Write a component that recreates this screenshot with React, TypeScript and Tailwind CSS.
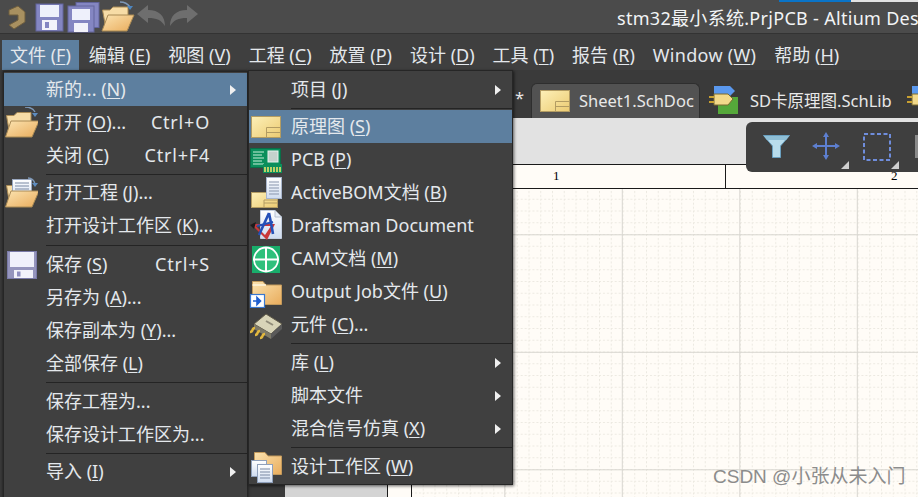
import type { ReactNode } from 'react';

const Label = ({ text }: { text: string }) => {
  const m = text.match(/^(.*\()(.)(\).*)$/);
  if (!m) return <span>{text}</span>;
  return (
    <span>
      {m[1]}
      <u className="underline-offset-2">{m[2]}</u>
      {m[3]}
    </span>
  );
};

const Defs = () => (
  <svg className="absolute w-0 h-0">
    <defs>
      <linearGradient id="yel" x1="0" y1="0" x2="1" y2="1">
        <stop offset="0" stopColor="#fdf0b8" />
        <stop offset="1" stopColor="#eccb72" />
      </linearGradient>
      <linearGradient id="org" x1="0" y1="0" x2="1" y2="1">
        <stop offset="0" stopColor="#fbe3b0" />
        <stop offset="1" stopColor="#e9ac5c" />
      </linearGradient>
      <linearGradient id="doc" x1="0" y1="0" x2="0" y2="1">
        <stop offset="0" stopColor="#ffffff" />
        <stop offset="1" stopColor="#cfdcf0" />
      </linearGradient>
    </defs>
  </svg>
);

const Icon = ({ children }: { children: ReactNode }) => (
  <svg width="34" height="32" viewBox="0 0 34 32" className="shrink-0">
    {children}
  </svg>
);

const SchIcon = () => (
  <Icon>
    <rect x="2.5" y="5.5" width="29" height="21" fill="url(#yel)" stroke="#b39c62" />
    <path d="M17.5 26V16.5H31M17.5 21.5H31" fill="none" stroke="#b39c62" />
  </Icon>
);

const PcbIcon = () => (
  <Icon>
    <rect x="1.5" y="4.5" width="30" height="19" fill="#0b8f5c" stroke="#0a6e48" />
    <path d="M4 8h11M4 11h9M4 14h11M4 17h9M4 20h11" stroke="#c8efd8" />
    <rect x="19" y="7" width="10" height="11" fill="#c4d2cc" stroke="#e8f2ee" />
    <rect x="14" y="20" width="19" height="9" fill="#0b8f5c" />
    <path d="M16 23v5M19 23v5M22 23v5M25 23v5M28 23v5M31 23v5" stroke="#e8e06a" strokeWidth="1.6" />
  </Icon>
);

const BomIcon = () => (
  <Icon>
    <rect x="2.5" y="15.5" width="26" height="15" fill="url(#yel)" stroke="#b39c62" />
    <path d="M15 30v-7h13M15 26h13" fill="none" stroke="#b39c62" />
    <rect x="17.5" y="0.5" width="15" height="21" fill="url(#doc)" stroke="#a9b6cc" />
    <path d="M20 5h10M20 8h10M20 11h10M20 14h10M20 17h10" stroke="#8895ad" />
  </Icon>
);

const DraftIcon = () => (
  <Icon>
    <path d="M11.5 0.5H26L32.5 7V28.5H11.5Z" fill="url(#doc)" stroke="#c4cede" />
    <path d="M26 .5V7H32.5" fill="#e7edf6" stroke="#b5c0d2" />
    <path d="M2 14L26 14L18 30Z M7 16L16 25L22 16Z" fill="#c9383a" fillRule="evenodd" />
    <path d="M20 3L15 14L10 25M20 3L22 13L24 24" stroke="#2550b8" strokeWidth="2.6" fill="none" />
    <path d="M8 16L24 12" stroke="#2550b8" strokeWidth="2" />
    <path d="M1 15L7 12L5 19Z" fill="#1c1c1c" />
  </Icon>
);

const CamIcon = () => (
  <Icon>
    <rect x="3" y="3" width="28" height="27" fill="#19ad6b" />
    <circle cx="17" cy="16.5" r="12" fill="#2fc07c" stroke="#fff" strokeWidth="1.8" />
    <path d="M17 4v25M4 16.5h26" stroke="#fff" strokeWidth="2" />
  </Icon>
);

const OutIcon = () => (
  <Icon>
    <path d="M3.5 5.5H14L17 9H32.5V28.5H3.5Z" fill="url(#org)" stroke="#c39a5c" />
    <path d="M3.5 9H17" stroke="#fff6df" strokeWidth="1.5" />
    <rect x="1.5" y="18.5" width="14" height="13" fill="#fff" stroke="#3a78d0" strokeWidth="1.2" />
    <path d="M4 25h7M8 21.5L11.5 25L8 28.5Z" stroke="#1f5fd0" strokeWidth="1.6" fill="#1f5fd0" />
  </Icon>
);

const ChipIcon = () => (
  <Icon>
    <path d="M5 15L17 5L33 15L22 25Z" fill="#d8d4b8" stroke="#5f5a48" />
    <path d="M5 15V20L22 30V25Z" fill="#7e7a68" />
    <path d="M22 25V30L33 20V15Z" fill="#5a5a5a" />
    <path d="M17 12L24 16" stroke="#8f8b78" strokeWidth="2" />
    <path d="M6 19C2 19 5 23 1 23M11 22C7 22 10 26 6 26M16 25C12 25 15 29 11 29" stroke="#e2b83e" strokeWidth="2.6" fill="none" />
  </Icon>
);

const WsIcon = () => (
  <Icon>
    <path d="M5.5 1.5H16L19 5H32.5V23.5H5.5Z" fill="url(#org)" stroke="#c39a5c" />
    <rect x="2.5" y="9.5" width="15" height="16" fill="url(#doc)" stroke="#8fa0bb" />
    <rect x="8.5" y="13.5" width="15" height="18" fill="url(#doc)" stroke="#8fa0bb" />
    <path d="M11 18h10M11 21h10M11 24h10M11 27h10" stroke="#7b89a3" />
  </Icon>
);

const OpenIcon = ({ doc }: { doc?: boolean }) => (
  <Icon>
    <path d="M2.5 8.5H10L13 5.5H27V29H6Z" fill="#f7dca6" stroke="#a98a55" />
    {doc && (
      <>
        <rect x="8.5" y="2.5" width="19" height="19" fill="url(#doc)" stroke="#9aa8c0" />
        <path d="M11 6h14M11 9h14M11 12h14M11 15h10" stroke="#7b89a3" />
      </>
    )}
    <path d="M1.5 30L7 14H35L28 30Z" fill="url(#org)" stroke="#a98a55" />
    <path d={doc ? 'M24 1C28 1 30 3 31 7' : 'M21 0C26 0 29 1 31 5'} stroke="#7d98b8" strokeWidth="1.4" fill="none" />
    <path d="M28 6L34 6L31 10Z" fill="#5d8cc0" />
  </Icon>
);

const SaveIcon = () => (
  <Icon>
    <rect x="3.5" y="2.5" width="29" height="27" fill="#9595bd" stroke="#7a7aa8" />
    <rect x="6" y="3" width="24" height="15" fill="#f0f1fb" />
    <rect x="10" y="21" width="19" height="8" fill="#f2f2fa" />
    <rect x="13" y="22.5" width="3.5" height="5" fill="#8f8fc0" />
  </Icon>
);

const Arrow = () => (
  <div className="w-0 h-0 border-y-[5.5px] border-y-transparent border-l-[6px] border-l-[#f0f0f0]" />
);

const Row = ({ text, icon, shortcut, arrow, active }: { text: string; icon?: ReactNode; shortcut?: string; arrow?: boolean; active?: boolean }) => (
  <div className={`h-[33px] flex items-center ${active ? 'bg-[#5d7f9f]' : ''}`}>
    <div className="w-[42px] shrink-0 flex items-center">{icon}</div>
    <div className="flex-1 whitespace-nowrap pb-[2px]"><Label text={text} /></div>
    {shortcut && <div className="mr-[37px] pb-[2px] whitespace-nowrap tracking-[0.8px]">{shortcut}</div>}
    {arrow && <div className="mr-[11px]"><Arrow /></div>}
  </div>
);

const Sep = ({ className }: { className: string }) => (
  <div className={`flex items-center pl-[42px] ${className}`}>
    <div className="h-px w-full bg-[#242424]" />
  </div>
);

const FileMenu = () => (
  <div className="absolute left-[3px] top-[71px] w-[245px] h-[440px] bg-[#404040] border border-[#262626] pt-px text-[#e4e8ec] shadow-[0_0_3px_rgba(0,0,0,.6)]">
    <Row text="新的... (N)" arrow active />
    <Row text="打开 (O)..." shortcut="Ctrl+O" icon={<OpenIcon />} />
    <Row text="关闭 (C)" shortcut="Ctrl+F4" />
    <Sep className="h-[4px]" />
    <Row text="打开工程 (J)..." icon={<OpenIcon doc />} />
    <Row text="打开设计工作区 (K)..." />
    <Sep className="h-[6px]" />
    <Row text="保存 (S)" shortcut="Ctrl+S" icon={<SaveIcon />} />
    <Row text="另存为 (A)..." />
    <Row text="保存副本为 (Y)..." />
    <Row text="全部保存 (L)" />
    <Sep className="h-[5px]" />
    <Row text="保存工程为..." />
    <Row text="保存设计工作区为..." />
    <Sep className="h-[4px]" />
    <Row text="导入 (I)" arrow />
    <div className="pt-[3px]">
      <Row text="导出 (E)" arrow />
    </div>
  </div>
);

const NewMenu = () => (
  <div className="absolute left-[248px] top-[70px] w-[265px] h-[415px] bg-[#404040] border border-[#262626] pt-[2px] text-[#e4e8ec] shadow-[1px_1px_3px_rgba(0,0,0,.6)]">
    <Row text="项目 (J)" arrow />
    <Sep className="h-[4px]" />
    <Row text="原理图 (S)" icon={<SchIcon />} active />
    <Row text="PCB (P)" icon={<PcbIcon />} />
    <Row text="ActiveBOM文档 (B)" icon={<BomIcon />} />
    <Row text="Draftsman Document" icon={<DraftIcon />} />
    <Row text="CAM文档 (M)" icon={<CamIcon />} />
    <Row text="Output Job文件 (U)" icon={<OutIcon />} />
    <Row text="元件 (C)..." icon={<ChipIcon />} />
    <Sep className="h-[5px]" />
    <Row text="库 (L)" arrow />
    <Row text="脚本文件" arrow />
    <Row text="混合信号仿真 (X)" arrow />
    <Sep className="h-[5px]" />
    <Row text="设计工作区 (W)" icon={<WsIcon />} />
  </div>
);

const menus = ['文件 (F)', '编辑 (E)', '视图 (V)', '工程 (C)', '放置 (P)', '设计 (D)', '工具 (T)', '报告 (R)', 'Window (W)', '帮助 (H)'];

const TitleBar = () => (
  <div className="relative h-[34px] bg-[#4b4b4b] border-b border-[#333] flex items-center pl-[6px] overflow-hidden shrink-0">
    <div className="absolute left-[779px] top-0 h-[2px] w-[72px] bg-[#0a74c8]" />
    <div className="absolute left-[851px] top-0 h-[2px] w-[67px] bg-[#e2e2e2]" />
    <svg width="200" height="32" viewBox="0 0 200 32" className="shrink-0">
      <path d="M3 9L12 5L19 11V21L8 28L3 24L12 19V14L3 14Z" fill="#a89060" stroke="#6f5e3e" />
      <g>
        <rect x="30" y="3" width="27" height="27" fill="#8486c2" stroke="#62649c" />
        <rect x="34" y="4" width="19" height="12" fill="#eef0fb" />
        <rect x="36" y="19" width="15" height="10" fill="#f2f2fa" />
        <rect x="39" y="21" width="4" height="6" fill="#8486c2" />
      </g>
      <g>
        <rect x="70" y="1.5" width="23" height="25" fill="#8486c2" stroke="#62649c" />
        <rect x="62" y="5" width="26" height="26" fill="#8486c2" stroke="#62649c" />
        <rect x="66" y="8" width="18" height="11" fill="#eef0fb" />
        <rect x="68" y="22" width="14" height="9" fill="#f2f2fa" />
      </g>
      <g>
        <path d="M96.5 9H104L107 6H122V28H100Z" fill="#f7dca6" stroke="#a98a55" />
        <path d="M96 30L102 14H128L121 30Z" fill="url(#org)" stroke="#a98a55" />
        <path d="M114 1C120 1 122 3 124 6" stroke="#7d98b8" strokeWidth="1.4" fill="none" />
        <path d="M121 5L127 5L124 9Z" fill="#4d86c0" />
      </g>
      <path d="M131 13L142 4V9C153 9 159 15 159 25C155 19 151 17 142 17V22Z" fill="#6e6e6e" />
      <path d="M192 13L181 4V9C170 9 164 15 164 25C168 19 172 17 181 17V22Z" fill="#6e6e6e" />
    </svg>
    <div className="absolute left-[617px] top-[5px] text-[#f2f4f6] whitespace-nowrap leading-[26px] tracking-[0.3px]">stm32最小系统.PrjPCB - Altium Des</div>
  </div>
);

const MenuBar = () => (
  <div className="h-[36px] bg-[#3f3f3f] flex items-end pl-[2px] shrink-0">
    {menus.map((m, i) => (
      <div key={m} className={`h-[30px] px-[8px] mr-[2px] flex items-center whitespace-nowrap text-[#e4e8ec] ${i === 0 ? 'bg-[#5d7f9f]' : ''} ${m.startsWith('Window') ? 'tracking-[0.3px]' : ''}`}>
        <Label text={m} />
      </div>
    ))}
  </div>
);

const TabBar = () => (
  <div className="h-[48px] bg-[#3a3a3a] flex items-end pl-[515px] text-[#e8e8e8] text-[16.5px] shrink-0 whitespace-nowrap overflow-hidden">
    <div className="self-center mt-[8px] w-[16px] shrink-0 text-[#e8e8e8]">*</div>
    <div className="h-[35px] w-[169px] shrink-0 bg-[#525252] border border-[#2e2e2e] border-b-0 rounded-t-md flex items-center pl-[6px] gap-[7px]">
      <SchIcon />
      <span>Sheet1.SchDoc</span>
    </div>
    <div className="h-[35px] shrink-0 flex items-center pl-[8px]">
      <svg width="32" height="32" viewBox="0 0 32 32" className="shrink-0">
        <path d="M6 1H22L27 6L22 11H6Z" fill="#5a98ee" />
        <rect x="10" y="12" width="20" height="17" fill="#55a83a" />
        <path d="M6 9H20L25 14L20 20H6Z" fill="#f2d98a" stroke="#7a6a30" />
        <path d="M1 12H6M1 17H6" stroke="#c8a030" strokeWidth="2" />
      </svg>
      <span className="ml-[10px]">SD卡原理图.SchLib</span>
    </div>
    <div className="h-[35px] shrink-0 flex items-center pl-[14px]">
      <svg width="32" height="32" viewBox="0 0 32 32" className="shrink-0">
        <path d="M6 1H22L27 6L22 11H6Z" fill="#5a98ee" />
        <path d="M6 9H20L25 14L20 20H6Z" fill="#f2d98a" stroke="#7a6a30" />
        <path d="M1 12H6M1 17H6" stroke="#c8a030" strokeWidth="2" />
      </svg>
    </div>
  </div>
);

const FloatingTools = () => (
  <div className="absolute left-[746px] top-[122px] w-[200px] h-[50px] bg-[#3f3f3f] rounded-md flex items-center">
    <svg width="172" height="50" viewBox="0 0 172 50">
      <path d="M17.5 13.5H43.5L34.5 24V35.5H26.5V24Z" fill="#b8dcec" stroke="#6aa0c0" />
      <path d="M18 14H43L40 18H21Z" fill="#8fbfd6" />
      <path d="M80 12V36M68 24H92" stroke="#5d7fd0" strokeWidth="2" />
      <path d="M80 10L83 15H77ZM80 38L83 33H77ZM66 24L71 21V27ZM94 24L89 21V27Z" fill="#5d7fd0" />
      <rect x="118" y="12" width="26" height="26" fill="none" stroke="#6f8ddc" strokeWidth="2" strokeDasharray="4 2.5" />
      <path d="M103 47L95 47L103 39Z" fill="#cfcfcf" />
      <path d="M153 47L145 47L153 39Z" fill="#cfcfcf" />
      <rect x="169" y="13" width="3" height="23" fill="#8a8a8a" />
    </svg>
  </div>
);

const Sheet = () => (
  <div className="flex-1 flex flex-col border-l border-[#1a1a1a] bg-[#fffcf7] font-['Liberation_Serif',serif] text-black">
    <div className="h-[25px] border-y border-[#1a1a1a] flex shrink-0 text-[13px] leading-[22px]">
      <div className="w-[23px] shrink-0" />
      <div className="w-[315px] border-l border-r border-[#1a1a1a] pl-[141px]">1</div>
      <div className="pl-[165px]">2</div>
    </div>
    <div className="flex flex-1 min-h-0">
      <div className="w-[23px] shrink-0" />
      <svg className="flex-1 h-full border-l border-[#1a1a1a]">
        <defs>
          <pattern id="minor" width="11.75" height="11.75" patternUnits="userSpaceOnUse" x="-1" y="-2">
            <path d="M0 0.5H11.75M0.5 0V11.75" stroke="#ece9e1" strokeWidth="1" strokeDasharray="2 2" fill="none" />
          </pattern>
          <pattern id="major" width="117.5" height="117.5" patternUnits="userSpaceOnUse" x="92.3" y="45.3">
            <path d="M0 0.5H117.5M0.5 0V117.5" stroke="#d8d6d0" strokeWidth="1" fill="none" />
          </pattern>
        </defs>
        <rect width="100%" height="100%" fill="url(#minor)" />
        <rect width="100%" height="100%" fill="url(#major)" />
      </svg>
    </div>
  </div>
);

const App = () => (
  <div className="relative w-[918px] h-[497px] overflow-hidden bg-[#3a3a3a] flex flex-col font-['Noto_Sans','Noto_Sans_CJK_SC',sans-serif] text-[18px] leading-[24px]">
    <Defs />
    <TitleBar />
    <MenuBar />
    <TabBar />
    <div className="flex flex-1 min-h-0">
      <div className="w-[285px] shrink-0 bg-[#3a3a3a]" />
      <div className="flex-1 flex flex-col min-w-0">
        <div className="h-[46px] shrink-0 bg-[#e2e2e2]" />
        <div className="flex flex-1 min-h-0">
          <div className="w-[102px] shrink-0 bg-[#d4d4d4]" />
          <Sheet />
        </div>
      </div>
    </div>
    <FloatingTools />
    <FileMenu />
    <NewMenu />
    <div className="absolute left-[713px] top-[465px] text-[19px] text-[#8c8c8c] font-['Liberation_Sans','Noto_Sans_CJK_SC',sans-serif] whitespace-nowrap">CSDN @小张从未入门</div>
  </div>
);

export default App;
